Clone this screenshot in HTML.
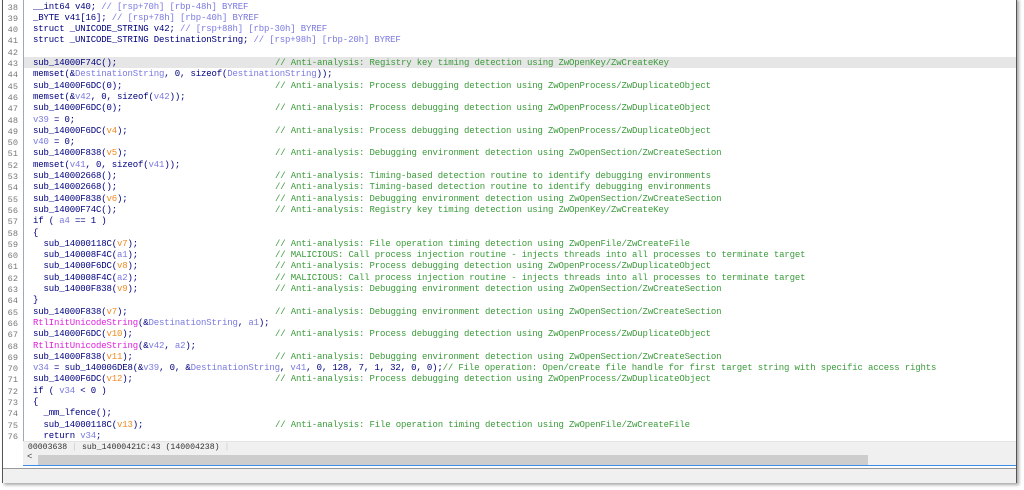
<!DOCTYPE html>
<html><head><meta charset="utf-8"><style>
body{margin:0;width:1024px;height:490px;background:#fff;position:relative;overflow:hidden;font-family:"Liberation Mono",monospace;}
.frame{position:absolute;left:2px;top:-2px;width:1013px;height:484px;border:1px solid #555;border-top:none;box-shadow:2px 2px 3px rgba(0,0,0,.35);background:#fff;}
.gut{position:absolute;left:0;top:0;width:20px;height:444px;border-right:1px solid #9ab;background:#fff;}
.ln{position:absolute;left:2px;width:16px;text-align:right;color:#777;font-size:8.6px;}
.l{position:absolute;left:33px;font-size:9px;letter-spacing:-0.15px;color:#000080;white-space:pre;line-height:11px;}
.c{position:absolute;left:275px;color:#3a9a3a;font-size:9px;letter-spacing:-0.15px;white-space:pre;line-height:11px;}
.v{color:#7a7ae0}.o{color:#f08a20}.m{color:#e020e0}.g{color:#3a9a3a}
.hl{position:absolute;left:21px;width:992px;height:11px;background:#e6e6e6;}
.status{position:absolute;left:20px;top:443px;width:993px;height:12px;background:#f0f0f0;border-top:1px solid #e4e4e4;font-size:8.2px;color:#333;white-space:pre;line-height:12px;}
.sb{position:absolute;left:20px;top:456px;width:993px;height:11px;background:#f0f0f0;border-bottom:1px solid #3a8ee6;}
.thumb{position:absolute;left:15px;top:1px;width:830px;height:10px;background:#cdcdcd;}
.bot{position:absolute;left:0;top:470px;width:1013px;height:14px;background:#f0f0f0;border-top:1px solid #999;}
</style></head><body>
<div class="frame">
<div class="hl" style="top:59px"></div>
<div class="gut"></div>
<div class="status"> 00003638 <span style="color:#ccc">|</span> sub_14000421C:43 (140004238) <span style="color:#ccc">|</span></div>
<div class="sb"><span style="position:absolute;left:4px;top:-2px;font-size:9px;color:#444">&lt;</span><div class="thumb"></div></div>
<div class="bot"></div>
</div>
<div id="code"></div>
<script>
var L=[
['  __int64 v40; <span class=v>// [rsp+70h] [rbp-48h] BYREF</span>',''],
['  _BYTE v41[16]; <span class=v>// [rsp+78h] [rbp-40h] BYREF</span>',''],
['  struct _UNICODE_STRING v42; <span class=v>// [rsp+88h] [rbp-30h] BYREF</span>',''],
['  struct _UNICODE_STRING DestinationString; <span class=v>// [rsp+98h] [rbp-20h] BYREF</span>',''],
['',''],
['  sub_14000F74C();','// Anti-analysis: Registry key timing detection using ZwOpenKey/ZwCreateKey'],
['  memset(&amp;<span class=v>DestinationString</span>, 0, sizeof(<span class=v>DestinationString</span>));',''],
['  sub_14000F6DC(0);','// Anti-analysis: Process debugging detection using ZwOpenProcess/ZwDuplicateObject'],
['  memset(&amp;<span class=v>v42</span>, 0, sizeof(<span class=v>v42</span>));',''],
['  sub_14000F6DC(0);','// Anti-analysis: Process debugging detection using ZwOpenProcess/ZwDuplicateObject'],
['  <span class=v>v39</span> = 0;',''],
['  sub_14000F6DC(<span class=o>v4</span>);','// Anti-analysis: Process debugging detection using ZwOpenProcess/ZwDuplicateObject'],
['  <span class=v>v40</span> = 0;',''],
['  sub_14000F838(<span class=o>v5</span>);','// Anti-analysis: Debugging environment detection using ZwOpenSection/ZwCreateSection'],
['  memset(<span class=v>v41</span>, 0, sizeof(<span class=v>v41</span>));',''],
['  sub_140002668();','// Anti-analysis: Timing-based detection routine to identify debugging environments'],
['  sub_140002668();','// Anti-analysis: Timing-based detection routine to identify debugging environments'],
['  sub_14000F838(<span class=o>v6</span>);','// Anti-analysis: Debugging environment detection using ZwOpenSection/ZwCreateSection'],
['  sub_14000F74C();','// Anti-analysis: Registry key timing detection using ZwOpenKey/ZwCreateKey'],
['  if ( <span class=v>a4</span> == 1 )',''],
['  {',''],
['    sub_14000118C(<span class=o>v7</span>);','// Anti-analysis: File operation timing detection using ZwOpenFile/ZwCreateFile'],
['    sub_140008F4C(<span class=v>a1</span>);','// MALICIOUS: Call process injection routine - injects threads into all processes to terminate target'],
['    sub_14000F6DC(<span class=o>v8</span>);','// Anti-analysis: Process debugging detection using ZwOpenProcess/ZwDuplicateObject'],
['    sub_140008F4C(<span class=v>a2</span>);','// MALICIOUS: Call process injection routine - injects threads into all processes to terminate target'],
['    sub_14000F838(<span class=o>v9</span>);','// Anti-analysis: Debugging environment detection using ZwOpenSection/ZwCreateSection'],
['  }',''],
['  sub_14000F838(<span class=o>v7</span>);','// Anti-analysis: Debugging environment detection using ZwOpenSection/ZwCreateSection'],
['  <span class=m>RtlInitUnicodeString</span>(&amp;<span class=v>DestinationString</span>, <span class=v>a1</span>);',''],
['  sub_14000F6DC(<span class=o>v10</span>);','// Anti-analysis: Process debugging detection using ZwOpenProcess/ZwDuplicateObject'],
['  <span class=m>RtlInitUnicodeString</span>(&amp;<span class=v>v42</span>, <span class=v>a2</span>);',''],
['  sub_14000F838(<span class=o>v11</span>);','// Anti-analysis: Debugging environment detection using ZwOpenSection/ZwCreateSection'],
['  <span class=v>v34</span> = sub_140006DE8(&amp;<span class=v>v39</span>, 0, &amp;<span class=v>DestinationString</span>, <span class=v>v41</span>, 0, 128, 7, 1, 32, 0, 0);<span class=g>// File operation: Open/create file handle for first target string with specific access rights</span>',''],
['  sub_14000F6DC(<span class=o>v12</span>);','// Anti-analysis: Process debugging detection using ZwOpenProcess/ZwDuplicateObject'],
['  if ( <span class=v>v34</span> &lt; 0 )',''],
['  {',''],
['    _mm_lfence();',''],
['    sub_14000118C(<span class=o>v13</span>);','// Anti-analysis: File operation timing detection using ZwOpenFile/ZwCreateFile'],
['    return <span class=v>v34</span>;','']];
var h='';
for(var i=0;i<L.length;i++){var t=1.5+i*11.3;
h+='<div class="ln" style="top:'+(t+1)+'px">'+(38+i)+'</div>';
h+='<div class="l" style="top:'+t+'px">'+L[i][0].replace(/^  /,'')+'</div>';
if(L[i][1])h+='<div class="c" style="top:'+t+'px">'+L[i][1]+'</div>';}
document.getElementById('code').innerHTML=h;
</script>
</body></html>
